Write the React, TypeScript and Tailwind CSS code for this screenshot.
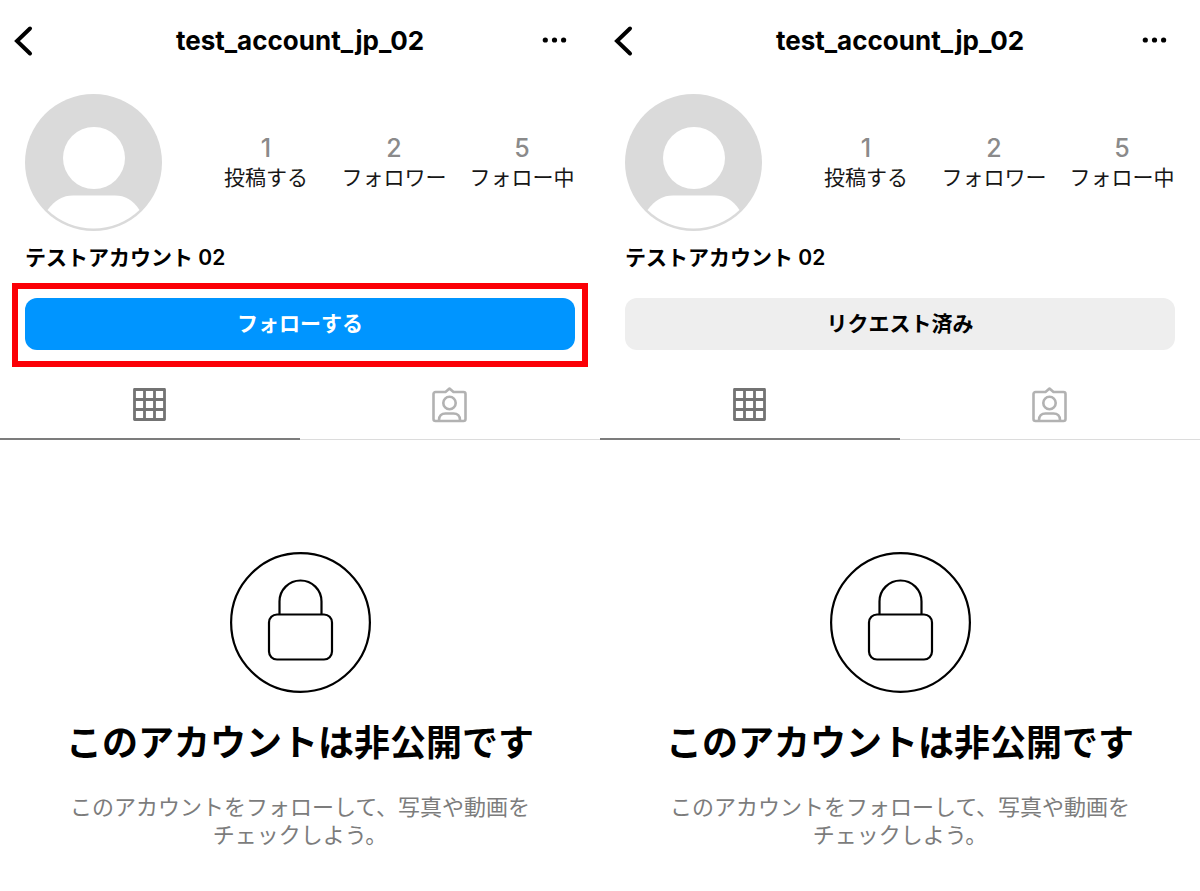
import { useState } from "react";

type Profile = {
  id: string;
  username: string;
  displayName: string;
  requested: boolean;
  highlighted: boolean;
};

type TabName = "grid" | "tagged";

const profiles: Profile[] = [
  {
    id: "before",
    username: "test_account_jp_02",
    displayName: "テストアカウント 02",
    requested: false,
    highlighted: true,
  },
  {
    id: "after",
    username: "test_account_jp_02",
    displayName: "テストアカウント 02",
    requested: true,
    highlighted: false,
  },
];

const stats = [
  { label: "投稿する", value: 1 },
  { label: "フォロワー", value: 2 },
  { label: "フォロー中", value: 5 },
];

export default function App() {
  return (
    <main className="grid min-h-screen grid-cols-2 bg-white font-['Inter','Noto_Sans_CJK_JP',sans-serif] text-black">
      {profiles.map((profile) => (
        <ProfileScreen key={profile.id} profile={profile} />
      ))}
    </main>
  );
}

function ProfileScreen({ profile }: { profile: Profile }) {
  const [requested, setRequested] = useState(profile.requested);
  const [tab, setTab] = useState<TabName>("grid");

  return (
    <section className="min-w-0 pb-10">
      <header className="grid h-[82px] grid-cols-[1fr_auto_1fr] items-center px-3">
        <button type="button" aria-label="戻る" className="justify-self-start">
          <BackIcon />
        </button>
        <h1 className="text-[26px] leading-[30px] font-bold">{profile.username}</h1>
        <button type="button" aria-label="その他" className="justify-self-end pr-5">
          <MoreIcon />
        </button>
      </header>

      <div className="flex items-center gap-10 pt-3 pr-[14px] pl-[25px]">
        <Avatar />
        <dl className="grid flex-1 grid-cols-3 text-center">
          {stats.map((stat) => (
            <div key={stat.label} className="flex flex-col-reverse">
              <dt className="text-[21px] leading-[30px] whitespace-nowrap text-neutral-900">
                {stat.label}
              </dt>
              <dd className="text-[25px] leading-[30px] font-medium text-[#8a8a8a]">
                {stat.value}
              </dd>
            </div>
          ))}
        </dl>
      </div>

      <p className="mt-3 px-[25px] text-[21px] leading-[30px] font-semibold">
        {profile.displayName}
      </p>

      <div
        className={`mx-3 mt-[10px] border-6 px-[7px] pt-[9px] pb-[11px] ${
          profile.highlighted ? "border-[#fb0006]" : "border-transparent"
        }`}
      >
        <button
          type="button"
          onClick={() => setRequested(!requested)}
          className={`h-[52px] w-full rounded-xl text-[21px] leading-[30px] font-semibold ${
            requested ? "bg-[#eeeeee] text-black" : "bg-[#0095ff] text-white"
          }`}
        >
          {requested ? "リクエスト済み" : "フォローする"}
        </button>
      </div>

      <nav className="grid grid-cols-2">
        <TabButton label="投稿" active={tab === "grid"} onClick={() => setTab("grid")}>
          <GridIcon />
        </TabButton>
        <TabButton label="タグ付け" active={tab === "tagged"} onClick={() => setTab("tagged")}>
          <TaggedIcon />
        </TabButton>
      </nav>

      <div className="flex flex-col items-center pt-28 text-center">
        <LockIcon />
        <h2 className="mt-7 text-4xl leading-[44px] font-bold">このアカウントは非公開です</h2>
        <p className="mt-7 text-[22px] leading-7 text-[#7c7c7c]">
          このアカウントをフォローして、写真や動画を
          <br />
          チェックしよう。
        </p>
      </div>
    </section>
  );
}

function TabButton({
  label,
  active,
  onClick,
  children,
}: {
  label: string;
  active: boolean;
  onClick: () => void;
  children: React.ReactNode;
}) {
  return (
    <button
      type="button"
      aria-label={label}
      onClick={onClick}
      className={`flex justify-center pt-5 ${
        active
          ? "border-b-2 border-[#7c7c7c] pb-[15px] text-[#737373]"
          : "border-b border-[#dcdcdc] pb-4 text-[#b2b2b2]"
      }`}
    >
      {children}
    </button>
  );
}

function BackIcon() {
  return (
    <svg width="22" height="32" viewBox="0 0 22 32" fill="none" stroke="currentColor" strokeWidth="4" strokeLinecap="round" strokeLinejoin="miter">
      <path d="M18 3.500 5 16l13 12.500" />
    </svg>
  );
}

function MoreIcon() {
  return (
    <svg width="26" height="10" viewBox="0 0 26 10" fill="currentColor">
      <circle cx="3.3" cy="4" r="2.600" />
      <circle cx="12.500" cy="4" r="2.600" />
      <circle cx="21.600" cy="4" r="2.600" />
    </svg>
  );
}

function Avatar() {
  return (
    <svg width="137" height="137" viewBox="0 0 137 137" className="shrink-0">
      <circle cx="68.5" cy="68.5" r="68.5" fill="#dadada" />
      <circle cx="69" cy="64" r="31" fill="#fff" />
      <path d="M22.5 116C30 106 38 101.5 48 101.5H90C100 101.5 108 106 114.5 116A66.5 66.5 0 0 1 22.5 116Z" fill="#fff" />
    </svg>
  );
}

function GridIcon() {
  return (
    <svg width="36" height="36" viewBox="0 0 36 36" fill="none" stroke="currentColor" strokeWidth="2.8" strokeLinejoin="round">
      <path d="M2.5 2.500h30v30h-30zM12.500 2.500v30M22.500 2.500v30M2.500 12.500h30M2.500 22.500h30" />
    </svg>
  );
}

function TaggedIcon() {
  return (
    <svg width="36" height="36" viewBox="0 0 36 36" fill="none" stroke="currentColor" strokeWidth="2.6" strokeLinejoin="round">
      <path d="M3.500 5h10l4-3.500L21.500 5h10a2 2 0 0 1 2 2v25a2 2 0 0 1-2 2h-28a2 2 0 0 1-2-2V7a2 2 0 0 1 2-2Z" />
      <circle cx="17.500" cy="16" r="6.200" />
      <path d="M7 34v-1c0-4 2.500-6.500 6.500-6.500h8c4 0 6.500 2.500 6.500 6.500v1" />
    </svg>
  );
}

function LockIcon() {
  return (
    <svg width="141" height="141" viewBox="0 0 141 141" fill="none" stroke="currentColor" strokeWidth="2.2">
      <circle cx="70.5" cy="70.5" r="69.4" />
      <rect x="39" y="62.5" width="63" height="45" rx="8" />
      <path d="M49.5 62.5v-13a21 21 0 0 1 42 0v13" />
    </svg>
  );
}
